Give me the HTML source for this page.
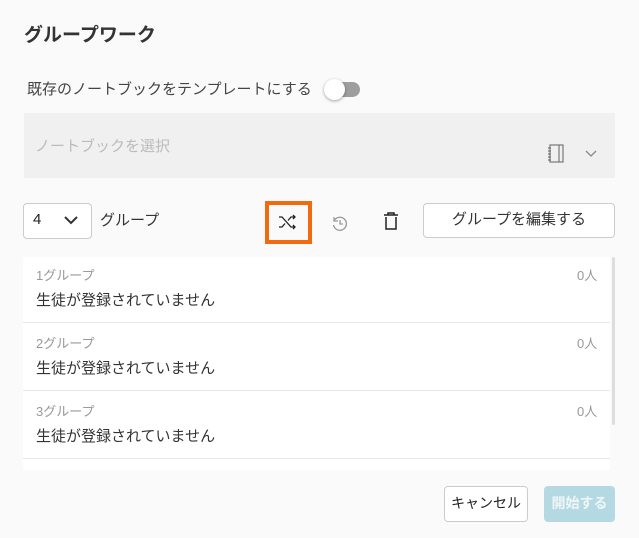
<!DOCTYPE html>
<html><head><meta charset="utf-8"><style>
*{box-sizing:border-box;margin:0;padding:0}
body{width:639px;height:538px;background:#fafafa;font-family:"Liberation Sans","Noto Sans CJK JP",sans-serif;color:#333;position:relative;overflow:hidden}
.a{position:absolute}
</style></head><body>
<div class="a" style="left:24px;top:20px;font-size:19px;font-weight:bold;color:#333">グループワーク</div>
<div class="a" style="left:27px;top:78px;font-size:15px;color:#444">既存のノートブックをテンプレートにする</div>
<div class="a" style="left:330px;top:82px;width:30px;height:15px;border-radius:8px;background:#9e9e9e"></div>
<div class="a" style="left:324px;top:79px;width:21px;height:21px;border-radius:50%;background:#fff;box-shadow:0 1px 3px rgba(0,0,0,.35)"></div>
<div class="a" style="left:24px;top:113px;width:591px;height:65px;background:#f0f0f0"></div>
<div class="a" style="left:35px;top:135px;font-size:15px;color:#bbb">ノートブックを選択</div>
<svg class="a" style="left:547px;top:143px" width="20" height="22" viewBox="0 0 20 22" fill="none" stroke="#777" stroke-width="1.2"><rect x="3" y="2" width="13" height="17"/><line x1="12" y1="2" x2="12" y2="19"/><path d="M1 5h3M1 8h3M1 11h3M1 14h3M1 17h3"/></svg>
<svg class="a" style="left:584px;top:148px" width="14" height="10" viewBox="0 0 14 10" fill="none" stroke="#888" stroke-width="1.3"><path d="M2 3l5 5 5-5"/></svg>
<div class="a" style="left:23px;top:203px;width:69px;height:36px;border:1px solid #ccc;border-radius:4px;background:#fff"></div>
<div class="a" style="left:33px;top:211px;font-size:15px;color:#222">4</div>
<svg class="a" style="left:63px;top:214px" width="16" height="12" viewBox="0 0 16 12" fill="none" stroke="#333" stroke-width="2"><path d="M2 3l6 6 6-6"/></svg>
<div class="a" style="left:100px;top:209px;font-size:15px;color:#333">グループ</div>
<div class="a" style="left:265px;top:201px;width:47px;height:43px;border:4px solid #f26a10"></div>
<svg class="a" style="left:277px;top:213px" width="22" height="18" viewBox="0 0 22 18" fill="none" stroke="#222" stroke-width="1.3"><path d="M2 4h3l9 10h4M2 14h3l3-3.5M11 7.5l3-3.5h4M16 2l2 2-2 2M16 12l2 2-2 2"/></svg>
<svg class="a" style="left:331px;top:215px" width="18" height="18" viewBox="0 0 18 18" fill="none" stroke="#999" stroke-width="1.3"><path d="M3 6a6.5 6.5 0 1 1-.5 4M3 2v4h4M9 5v4h3"/></svg>
<svg class="a" style="left:383px;top:211px" width="16" height="20" viewBox="0 0 16 20" fill="none" stroke="#222" stroke-width="1.5"><path d="M1 4h14M5 4V2h6v2M3 6v12h10V6"/></svg>
<div class="a" style="left:423px;top:203px;width:192px;height:35px;border:1px solid #ccc;border-radius:4px;background:#fff;text-align:center;line-height:31px;font-size:15px;color:#333">グループを編集する</div>
<div class="a" style="left:23px;top:257px;width:587px;height:213px;background:#fff"></div>
<div class="a" style="left:612px;top:257px;width:3px;height:168px;background:#ddd;border-radius:2px"></div>
<div class="a" style="left:23px;top:322px;width:587px;height:1px;background:#e8e8e8"></div>
<div class="a" style="left:23px;top:390px;width:587px;height:1px;background:#e8e8e8"></div>
<div class="a" style="left:23px;top:458px;width:587px;height:1px;background:#e8e8e8"></div>
<div class="a" style="left:36px;top:265px;font-size:13px;color:#999">1グループ</div>
<div class="a" style="left:577px;top:265px;font-size:13px;color:#999">0人</div>
<div class="a" style="left:36px;top:289px;font-size:15px;color:#333">生徒が登録されていません</div>
<div class="a" style="left:36px;top:333px;font-size:13px;color:#999">2グループ</div>
<div class="a" style="left:577px;top:333px;font-size:13px;color:#999">0人</div>
<div class="a" style="left:36px;top:357px;font-size:15px;color:#333">生徒が登録されていません</div>
<div class="a" style="left:36px;top:401px;font-size:13px;color:#999">3グループ</div>
<div class="a" style="left:577px;top:401px;font-size:13px;color:#999">0人</div>
<div class="a" style="left:36px;top:425px;font-size:15px;color:#333">生徒が登録されていません</div>
<div class="a" style="left:444px;top:486px;width:84px;height:36px;border:1px solid #ccc;border-radius:4px;background:#fff;text-align:center;line-height:33px;font-size:14px;color:#222">キャンセル</div>
<div class="a" style="left:544px;top:486px;width:71px;height:36px;border-radius:4px;background:#b5d9e2;text-align:center;line-height:34px;font-size:14px;font-weight:bold;color:#eef6f8">開始する</div>
</body></html>
